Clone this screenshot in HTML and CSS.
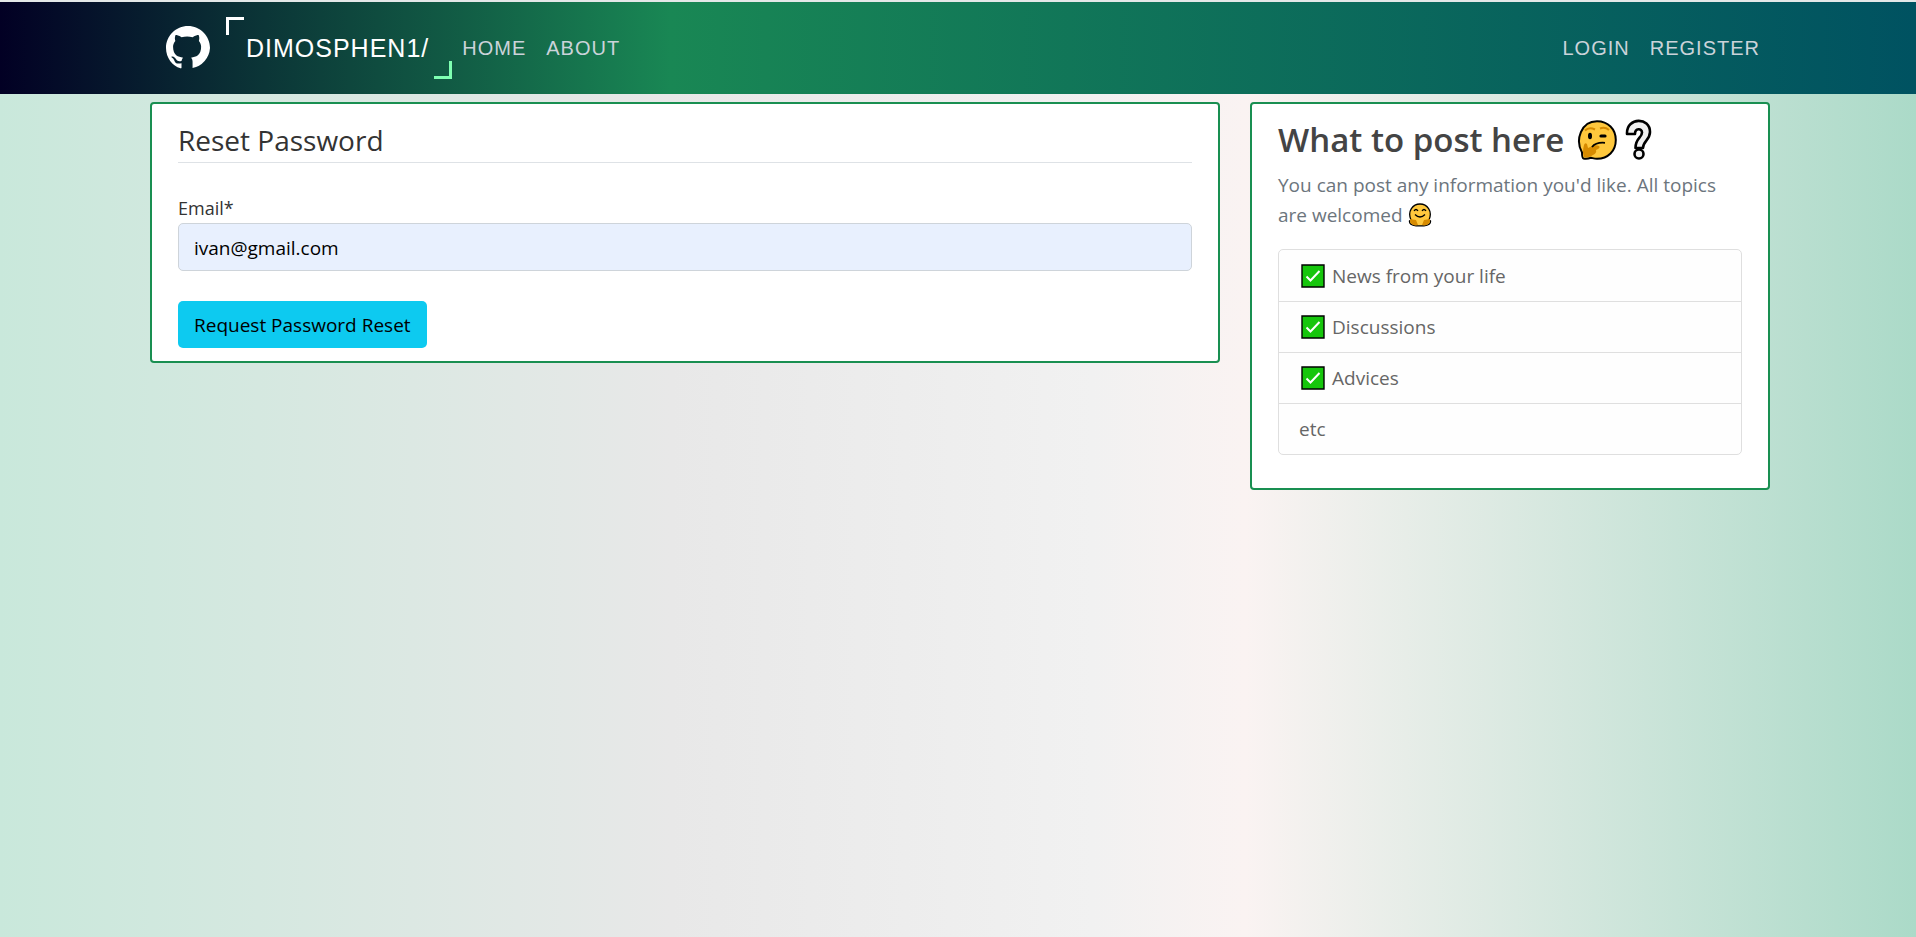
FILE: index.html
```html
<!DOCTYPE html>
<html lang="en">
<head>
<meta charset="utf-8">
<meta name="viewport" content="width=device-width, initial-scale=1">
<title>Reset Password</title>
<link rel="stylesheet" href="styles.css">
</head>
<body>
<header class="navbar">
  <div class="container navbar-inner">
    <a class="logo" href="#" aria-label="GitHub">
      <svg viewBox="0 0 16 16" width="44" height="44" fill="#fff"><path d="M8 0C3.58 0 0 3.58 0 8c0 3.54 2.29 6.53 5.300 7.400.3.07.35-.17.35-.38 0-.19-.01-.82-.01-1.49-2.01.37-2.33-.3-2.49-.75-.09-.23-.48-.94-.82-1.13-.28-.15-.68-.52-.01-.53.63-.01 1.080.58 1.230.82.72 1.210 1.670.9 2.150.66.07-.52.28-.87.51-1.070-1.780-.2-3.640-.89-3.640-3.950 0-.87.31-1.590.82-2.150-.08-.2-.36-1.020.08-2.120 0 0 .67-.21 2.200.82.64-.18 1.320-.27 2-.27s1.360.09 2 .27c1.530-1.040 2.200-.82 2.200-.82.44 1.100.16 1.920.08 2.120.51.56.82 1.270.82 2.150 0 3.070-1.870 3.750-3.650 3.950.29.25.54.73.54 1.480V15.300A8.010 8.010 0 0 0 16 8c0-4.420-3.580-8-8-8z"/></svg>
    </a>
    <a class="brand" href="#">Dimosphen1/</a>
    <nav class="links">
      <a href="#">Home</a>
      <a href="#">About</a>
    </nav>
    <nav class="links links-end">
      <a href="#">Login</a>
      <a href="#">Register</a>
    </nav>
  </div>
</header>
<main class="container layout">
  <section class="card form-card">
    <form>
      <h1 class="legend">Reset Password</h1>
      <label class="label" for="email">Email*</label>
      <input class="input" id="email" type="email" value="ivan@gmail.com">
      <button class="button" type="button">Request Password Reset</button>
    </form>
  </section>
  <aside class="card side-card">
    <h2 class="title">What to post here
      <svg class="emoji-large" viewBox="0 0 40 40" role="img" aria-label="thinking">
        <path d="M6.500 38.500Q5 38 5 32.500C-2 20 4 1.200 20 1.200C31 1.200 38.800 9 38.800 20C38.800 31 31 38.800 20 38.800C17 38.800 15 37.800 14 37.800C12 38.500 9 39 6.500 38.500Z" fill="#ffc83d" stroke="#000" stroke-width="2"/>
        <path d="M7 25Q8 22 10 24L11 28Q18 24 22 26Q24 28 19 30Q20 33 16 35Q12 38 7 37Q5 32 7 25Z" fill="#d78b00"/>
        <path d="M8 10.500Q12 6.500 18 9.500M23 8.500Q28 6.500 32 10" fill="none" stroke="#d78b00" stroke-width="2"/>
        <ellipse cx="13" cy="16" rx="2" ry="3.200"/>
        <path d="M24 16H28" fill="none" stroke="#000" stroke-width="3.200" stroke-linecap="round"/>
        <path d="M15 27Q19 22 28 22.800" fill="none" stroke="#000" stroke-width="1.800"/>
      </svg>
      <svg class="emoji-mark" viewBox="0 0 25 40" role="img" aria-label="question">
        <path d="M1 13C1 -3 24-3 24 12C24 20 17 21 17 28H9.500C9.500 18 16 18 16 12.500C16 8 9 8 9 14H1Z" fill="#f0f0f0" stroke="#000" stroke-width="2.600" stroke-linejoin="round"/>
        <circle cx="13" cy="34" r="4.500" fill="#f0f0f0" stroke="#000" stroke-width="2.600"/>
      </svg>
    </h2>
    <p class="intro">You can post any information you'd like. All topics are welcomed
      <svg class="emoji" viewBox="0 0 24 24" role="img" aria-label="hugging">
        <path d="M3 17C-1 8 5 1 12 1S25 8 21 17L22.500 18Q23 22 16 22.800H8Q1 22 1.500 18Z" fill="#ffc83d" stroke="#000" stroke-width="1.300"/>
        <path d="M2 16L8 17L10 22L7 22.500Q1 21 2 16ZM22 16L16 17L14 22L17 22.500Q23 21 22 16Z" fill="#d78b00"/>
        <path d="M6 8Q8 5 10 8M14 8Q16 5 18 8M7 11.500Q12 16.500 17 11.500" fill="none" stroke="#000" stroke-width="1.300"/>
      </svg>
    </p>
    <ul class="list">
      <li><svg class="tick" viewBox="0 0 24 24" aria-hidden="true"><path d="M1 1H23V23H1Z" fill="#16c60c" stroke="#000" stroke-width="1.400"/><path d="M5.500 12.500L9.500 16.500L18.500 7" fill="none" stroke="#fff" stroke-width="2"/></svg>News from your life</li>
      <li><svg class="tick" viewBox="0 0 24 24" aria-hidden="true"><path d="M1 1H23V23H1Z" fill="#16c60c" stroke="#000" stroke-width="1.400"/><path d="M5.500 12.500L9.500 16.500L18.500 7" fill="none" stroke="#fff" stroke-width="2"/></svg>Discussions</li>
      <li><svg class="tick" viewBox="0 0 24 24" aria-hidden="true"><path d="M1 1H23V23H1Z" fill="#16c60c" stroke="#000" stroke-width="1.400"/><path d="M5.500 12.500L9.500 16.500L18.500 7" fill="none" stroke="#fff" stroke-width="2"/></svg>Advices</li>
      <li>etc</li>
    </ul>
  </aside>
</main>
</body>
</html>
```
FILE: styles.css
```css
*,
*::before,
*::after { box-sizing: border-box; }

body {
  margin: 0;
  min-height: 100vh;
  color: #333;
  font: 19px/30px "Open Sans", "Noto Sans", sans-serif;
  background: linear-gradient(90deg, #c9e8db 0%, #e8e8e8 35%, #f1f1f1 57%, #faf3f2 65%, #abdac8 100%);
}

.container {
  width: 100%;
  max-width: 1624px;
  margin: 0 auto;
  padding-left: 4px;
}

.navbar {
  border-top: 2px solid #e4e8e8;
  background: linear-gradient(90deg, #020024 0%, #198754 35%, #005261 100%) padding-box;
}

.navbar-inner {
  display: flex;
  align-items: center;
  height: 92px;
  padding: 0 0 0 20px;
  font-family: "Liberation Sans", Arial, sans-serif;
  text-transform: uppercase;
  letter-spacing: 1px;
}

.navbar a { text-decoration: none; }

.logo {
  display: flex;
  margin-right: 16px;
}

.brand {
  position: relative;
  padding: 16px 23px 16px 20px;
  color: #fff;
  font-size: 25px;
}

.brand::before,
.brand::after {
  content: "";
  position: absolute;
  width: 18px;
  height: 18px;
}

.brand::before {
  top: 0;
  left: 0;
  border-top: 3px solid #fff;
  border-left: 3px solid #fff;
}

.brand::after {
  right: 0;
  bottom: 0;
  border-right: 3px solid #7fffb2;
  border-bottom: 3px solid #7fffb2;
}

.links {
  display: flex;
}

.links a {
  padding: 10px;
  color: #cbd3da;
  font-size: 20px;
}

.links-end { margin-left: auto; }

.layout {
  display: grid;
  grid-template-columns: 1070fr 520fr;
  align-items: start;
  gap: 30px;
  padding-top: 8px;
}

.card {
  border: 2px solid #198f51;
  border-radius: 4px;
  background: #fff;
}

.form-card {
  padding: 20px 26px 13px;
}

.side-card {
  padding: 15px 26px 33px;
}

.legend {
  margin: 0 0 30px;
  padding-bottom: 5px;
  border-bottom: 1px solid #dee2e6;
  font-size: 28px;
  font-weight: 400;
  line-height: 33px;
}

.label {
  display: block;
  font-size: 18px;
}

.input {
  display: block;
  width: 100%;
  height: 48px;
  margin-bottom: 30px;
  padding: 1px 15px 0;
  border: 1px solid #ced4da;
  border-radius: 5px;
  background: #e8f0fe;
  color: #000;
  font: inherit;
}

.button {
  display: block;
  height: 47px;
  padding: 1px 16px 0;
  border: 0;
  border-radius: 5px;
  background: #0dcaf0;
  color: #000;
  font: inherit;
}

.title {
  display: flex;
  align-items: center;
  margin: 0 0 9px;
  color: #444;
  font-size: 33px;
  font-weight: 600;
  line-height: 42px;
}

.emoji-large {
  width: 40px;
  height: 40px;
  margin-left: 13px;
}

.emoji-mark {
  width: 25px;
  height: 40px;
  margin-left: 9px;
  overflow: visible;
}

.intro {
  margin: 0 0 19px;
  color: #6c757d;
}

.emoji {
  width: 24px;
  height: 24px;
  margin-left: 1px;
  vertical-align: -5px;
}

.list {
  margin: 0;
  padding: 0;
  border: 1px solid #dfdfdf;
  border-radius: 5px;
  background: #fefefe;
  color: #666;
  list-style: none;
}

.list li {
  display: flex;
  align-items: center;
  padding: 11px 20px 10px;
}

.list li + li {
  border-top: 1px solid #dfdfdf;
  padding-top: 10px;
}

.tick {
  width: 24px;
  height: 24px;
  margin: 0 7px 0 2px;
}
```
